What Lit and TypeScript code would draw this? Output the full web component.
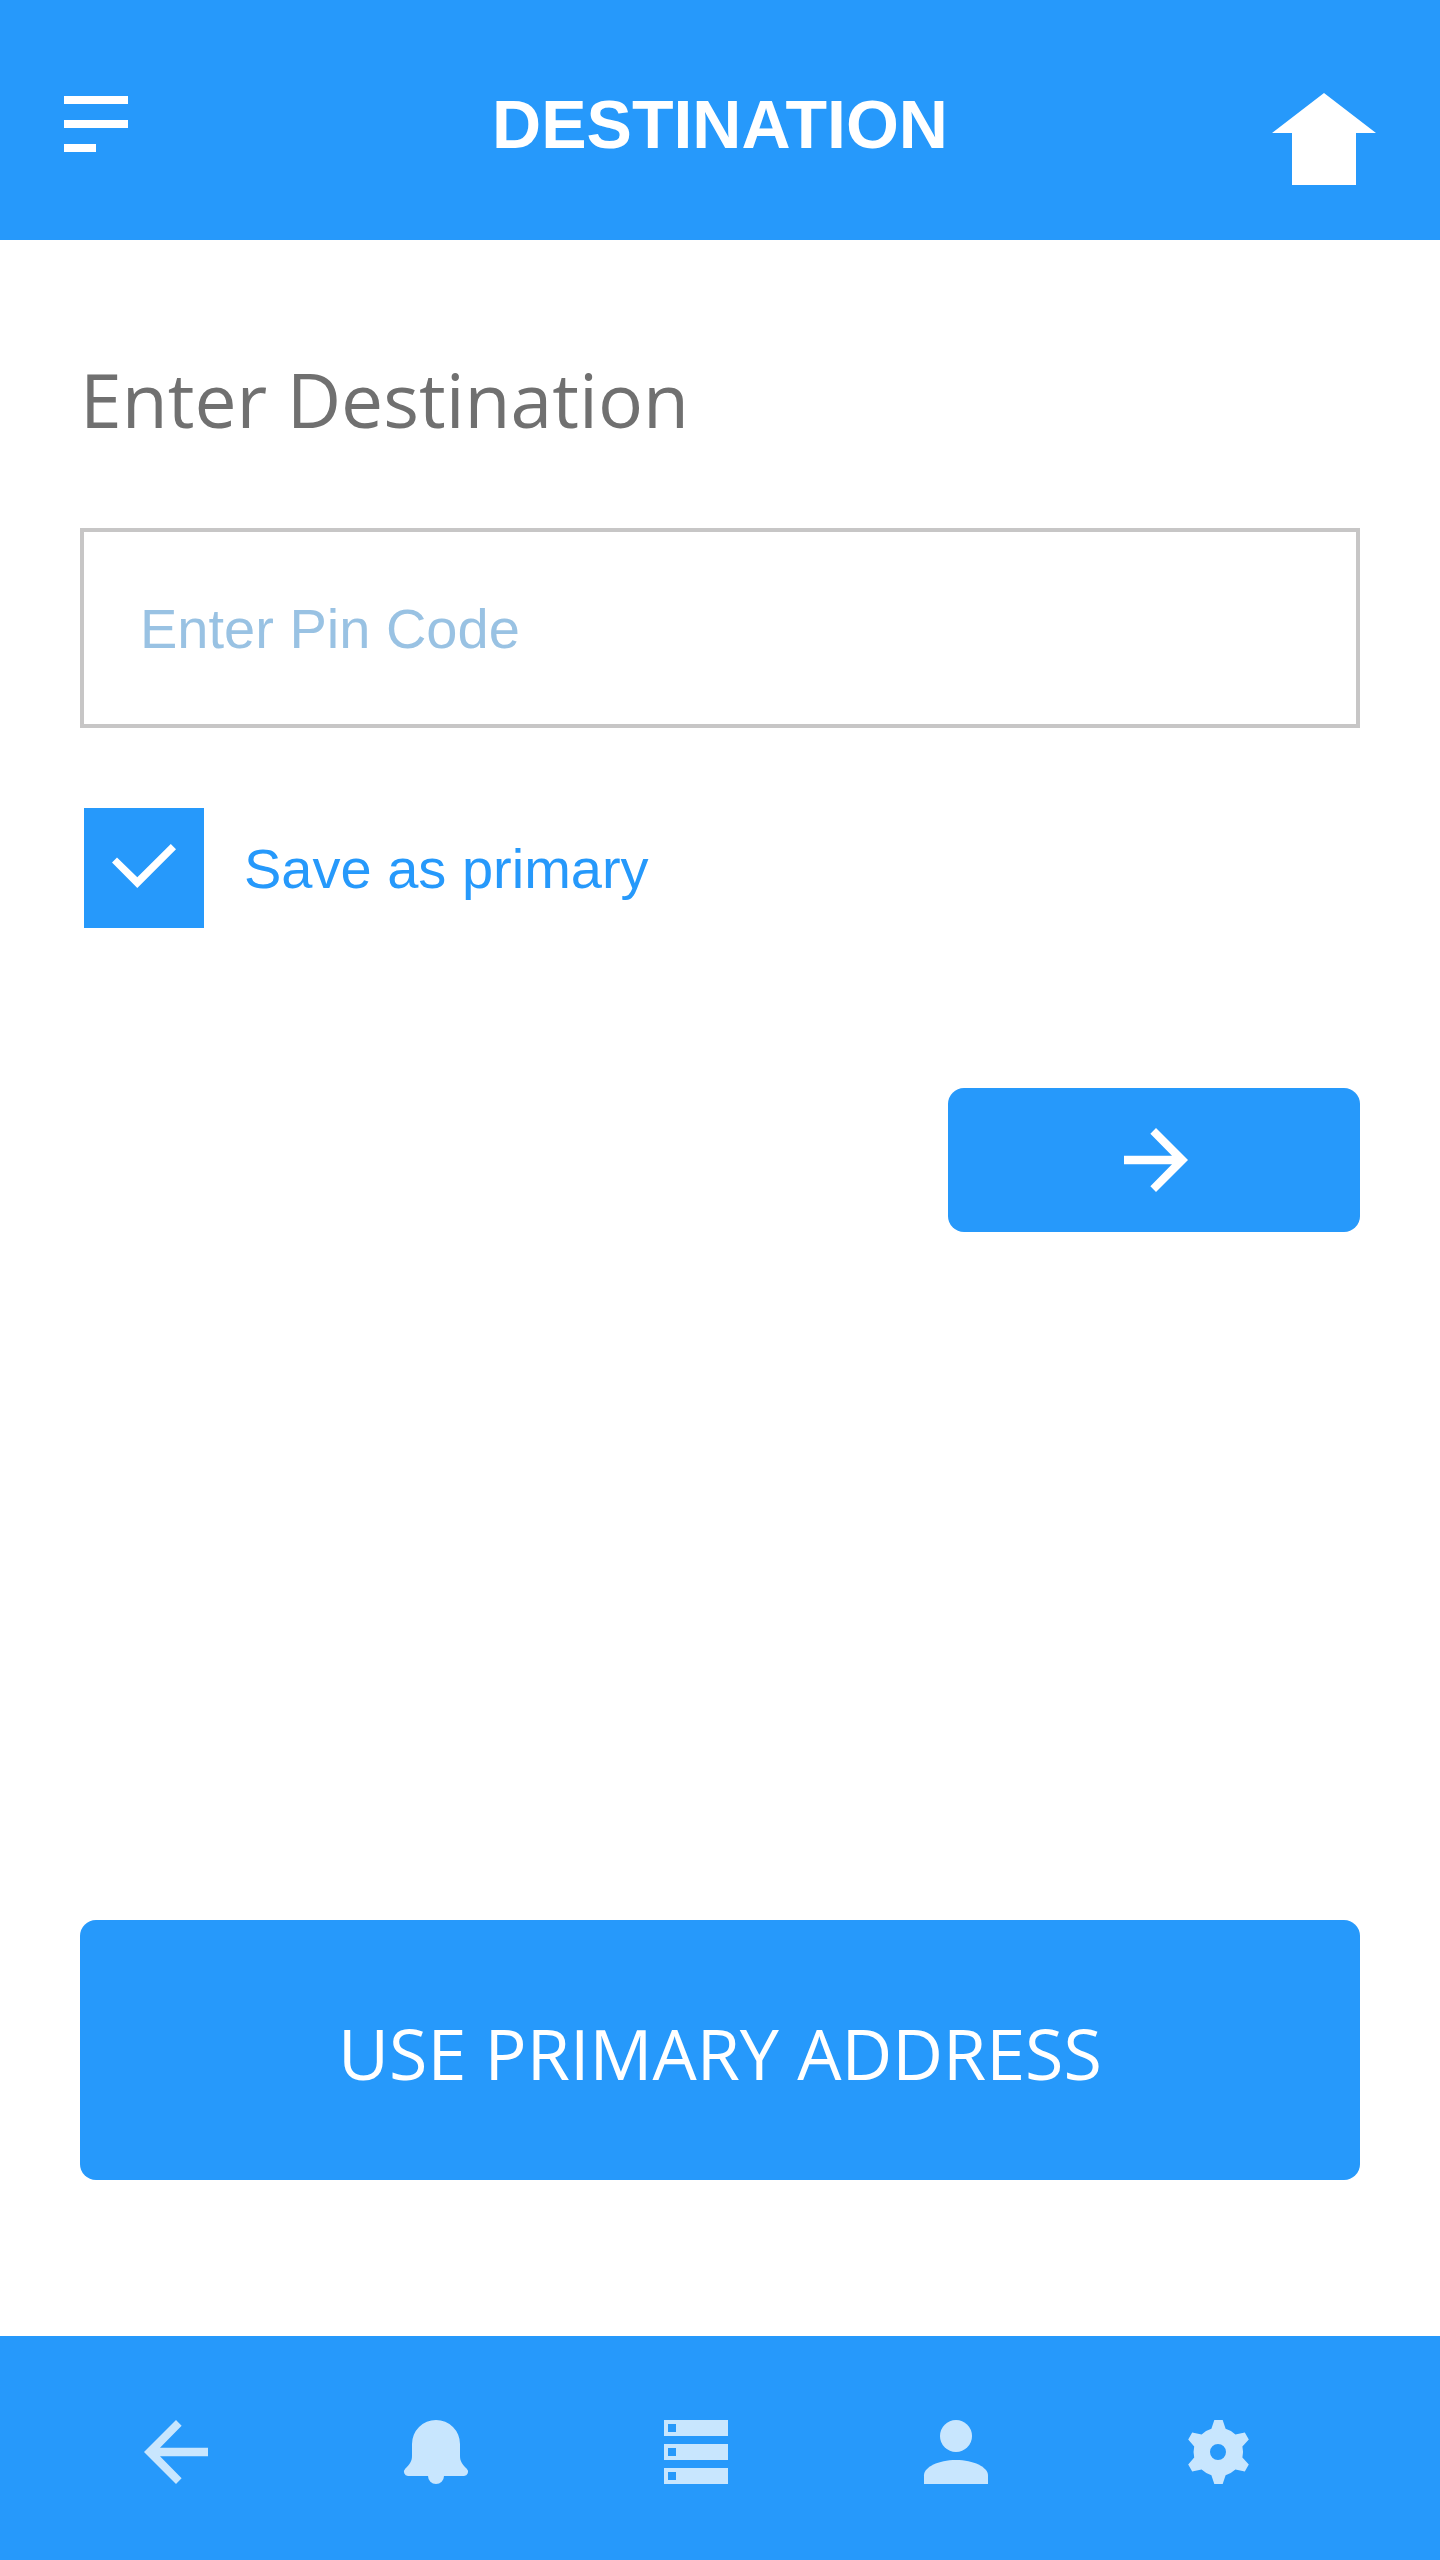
import { LitElement, html, css, svg } from "lit";
import { customElement, state } from "lit/decorators.js";

const navItems = [
  {
    label: "Back",
    shape: svg`<path d="M8 0l1.41 1.41L4 6.92h12v2.16H4l5.41 5.51L8 16 0 8z" />`,
  },
  {
    label: "Notifications",
    shape: svg`<path d="M8 0a6 6 0 0 0-6 6v3c0 1.3-.6 2.2-1.7 3.2A1.05 1.05 0 0 0 1 14h5a2 2 0 0 0 4 0h5a1.05 1.05 0 0 0 .7-1.8C14.6 11.2 14 10.3 14 9V6a6 6 0 0 0-6-6z" />`,
  },
  {
    label: "Orders",
    shape: svg`<path fill-rule="evenodd" d="M0 0h16v4H0zM1 1v2h2V1zM0 6h16v4H0zM1 7v2h2V7zM0 12h16v4H0zM1 13v2h2v-2z" />`,
  },
  {
    label: "Profile",
    shape: svg`<circle cx="8" cy="4" r="4" /><path d="M0 16v-2.2C0 11.8 3.6 10 8 10s8 1.8 8 3.8V16z" />`,
  },
  {
    label: "Settings",
    shape: svg`<path fill-rule="evenodd" d="M7.58 0H9.67L10.4 2.2A6 6 0 0 1 12.85 3.6L15.2 3.12 16.2 4.85 14.6 6.6A6 6 0 0 1 14.6 9.4L16.2 11.15 15.2 12.88 12.85 12.4A6 6 0 0 1 10.4 13.8L9.67 16H7.58L6.85 13.8A6 6 0 0 1 4.4 12.4L2.05 12.88 1.05 11.15 2.55 9.4A6 6 0 0 1 2.55 6.6L1.05 4.85 2.05 3.12 4.4 3.6A6 6 0 0 1 6.85 2.2zM8.5 6a2 2 0 1 0 0 4 2 2 0 0 0 0-4z" />`,
  },
];

@customElement("app-root")
export class AppRoot extends LitElement {
  static styles = css`
    :host {
      --blue: #2699fb;
      --icon: #c8e6fe;
      --body: "Liberation Sans", Arial, sans-serif;
      --display: "Open Sans", "Noto Sans", sans-serif;
      display: flex;
      flex-direction: column;
      min-height: 100vh;
      background: #fff;
      font-family: var(--body);
    }
    * {
      box-sizing: border-box;
    }
    button {
      border: 0;
      padding: 0;
      color: #fff;
      background: var(--blue);
      cursor: pointer;
    }
    svg {
      display: block;
      fill: currentColor;
      overflow: visible;
    }
    .top {
      display: grid;
      grid-template-columns: 1fr auto 1fr;
      align-items: start;
      padding: 92px 64px 55px;
      background: var(--blue);
      color: #fff;
    }
    .home {
      justify-self: end;
      color: #fff;
    }
    .title {
      margin: 0;
      font-size: 68px;
      line-height: 64px;
      font-weight: 700;
    }
    .menu {
      justify-self: start;
    }
    .content {
      flex: 1;
      display: flex;
      flex-direction: column;
      padding: 108px 80px 156px;
    }
    .heading {
      display: block;
      margin-bottom: 78px;
      font-family: var(--display);
      font-size: 75px;
      line-height: 102px;
      color: #707070;
    }
    .pin {
      width: 100%;
      height: 200px;
      padding: 0 56px;
      border: 4px solid #c7c6c6;
      border-radius: 0;
      background: #fff;
      font-family: var(--body);
      font-size: 56px;
      color: var(--blue);
    }
    .pin::placeholder {
      color: #99c2e3;
      opacity: 1;
    }
    .save {
      display: flex;
      align-items: center;
      align-self: start;
      gap: 40px;
      margin-top: 80px;
      padding-left: 4px;
      font-size: 56px;
      color: var(--blue);
    }
    .tick {
      display: grid;
      place-items: center;
      color: #fff;
    }
    .tick > * {
      grid-area: 1 / 1;
    }
    .tick svg {
      pointer-events: none;
    }
    .box {
      appearance: none;
      width: 120px;
      height: 120px;
      margin: 0;
      border: 4px solid var(--blue);
      background: #fff;
    }
    .box:checked {
      background: var(--blue);
    }
    .next {
      display: grid;
      place-items: center;
      align-self: end;
      width: 412px;
      max-width: 100%;
      height: 144px;
      margin: 160px 0 80px;
      padding-left: 4px;
      border-radius: 16px;
    }
    .primary {
      min-height: 260px;
      margin-top: auto;
      padding-top: 6px;
      border-radius: 16px;
      font-family: var(--display);
      font-size: 70px;
    }
    .nav {
      display: flex;
      justify-content: space-between;
      padding: 84px 192px 76px 144px;
      background: var(--blue);
    }
    .nav a {
      color: var(--icon);
    }
  `;

  @state() private savePrimary = true;

  render() {
    return html`
      <header class="top">
        <button class="menu" aria-label="Menu">
          <svg width="64" height="64" viewBox="0 0 64 64"><path d="M0 4h64v8H0zM0 28h64v8H0zM0 52h32v8H0z" /></svg>
        </button>
        <h1 class="title">DESTINATION</h1>
        <a class="home" href="#home" aria-label="Home">
          <svg width="104" height="93" viewBox="0 0 104 93"><path d="M52 1l52 40H84v52H20V41H0z" /></svg>
        </a>
      </header>
      <main class="content">
        <label class="heading" for="pin">Enter Destination</label>
        <input class="pin" id="pin" type="text" inputmode="numeric" placeholder="Enter Pin Code" />
        <label class="save">
          <span class="tick">
            <input
              class="box"
              type="checkbox"
              .checked=${this.savePrimary}
              @change=${(e: Event) => (this.savePrimary = (e.target as HTMLInputElement).checked)}
            />
            <svg width="64" height="48" viewBox="0 0 64 48"><path d="M0 18.500L5 13.500 25.300 33.300 58.800 0 64 5.300 25.300 44z" /></svg>
          </span>
          Save as primary
        </label>
        <button class="next" aria-label="Continue">
          <svg width="64" height="64" viewBox="0 0 16 16"><path d="M8 0L6.590 1.410 12 6.920H0v2.160h12l-5.410 5.510L8 16l8-8z" /></svg>
        </button>
        <button class="primary">USE PRIMARY ADDRESS</button>
      </main>
      <nav class="nav">
        ${navItems.map(
          (item) => html`
            <a href="#${item.label.toLowerCase()}" aria-label=${item.label}>
              <svg width="64" height="64" viewBox="0 0 16 16">${item.shape}</svg>
            </a>
          `,
        )}
      </nav>
    `;
  }
}
